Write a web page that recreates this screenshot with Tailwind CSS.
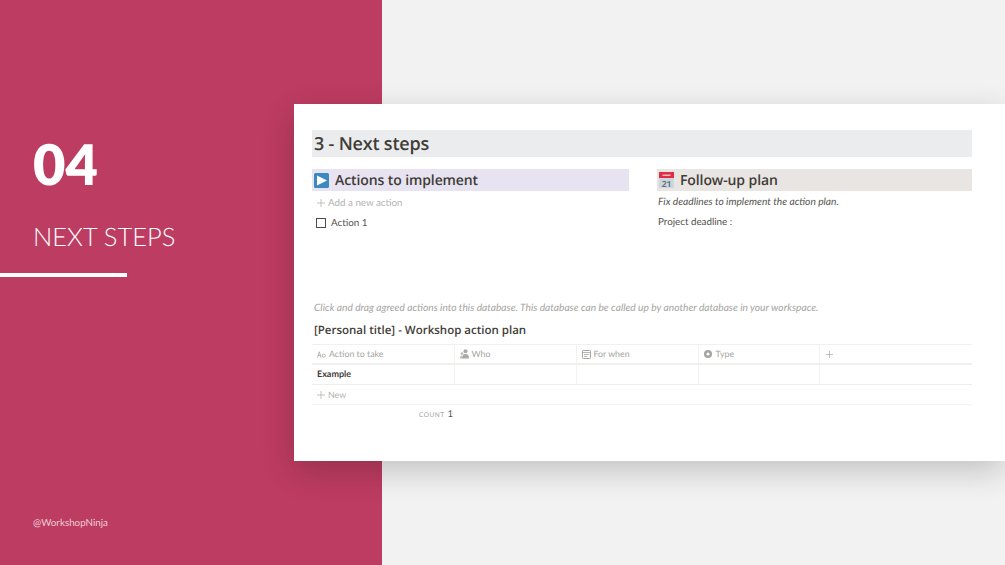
<!DOCTYPE html>
<html lang="en">
<head>
    <meta charset="UTF-8">
    <title>Next steps</title>
    <script src="https://cdn.jsdelivr.net/npm/@tailwindcss/browser@4"></script>
</head>
<body class="w-[1005px] h-[565px] overflow-hidden bg-[#f2f2f2] font-['Lato',sans-serif] [text-rendering:geometricPrecision]">
    <div class="relative w-full h-full">
        <!-- Left panel -->
        <div class="w-[381.5px] h-full bg-[#bd3c61] flex flex-col text-white">
            <div class="pl-[33px] pt-[134px] text-[56px] leading-[60px] font-extrabold">04</div>
            <div class="pl-[33px] mt-[26px] text-[25.5px] leading-[34px] font-light">NEXT STEPS</div>
            <div class="mt-[19px] w-[127px] h-[4px] bg-white"></div>
            <div class="pl-[33px] mt-auto mb-[35px] text-[9.8px] leading-[14px] text-white/75">@WorkshopNinja</div>
        </div>

        <!-- Floating notion window -->
        <div class="absolute left-[294px] top-[104px] w-[711px] h-[357px] bg-white pl-[18px] pr-[33px] pt-[26px] shadow-[0_10px_30px_rgba(0,0,0,0.2)] font-['Open_Sans',sans-serif]">
            <div class="h-[27px] bg-[#ebeced] pl-[2px] text-[18px] leading-[29px] font-semibold tracking-[-0.2px] text-[#3f3d38]">3 - Next steps</div>

            <div class="mt-[12px] flex justify-between">
                <div class="w-[317px]">
                    <div class="h-[22px] bg-[#e8e3f0] flex items-center pl-[2px] gap-[6px] text-[14px] font-semibold tracking-[-0.1px] text-[#3f3d38]">
                        <svg width="15" height="15" viewBox="0 0 15 15"><rect width="15" height="15" rx="1.5" fill="#3b88c3"/><path d="M3 2.5 L13 7.5 L3 12.5 Z" fill="#fff"/></svg>
                        <span>Actions to implement</span>
                    </div>
                    <div class="mt-[5px] flex items-center h-[14px] pl-[5px] gap-[3px] font-['Lato',sans-serif] text-[9.8px] text-[#b4b3af]">
                        <svg width="8" height="8" viewBox="0 0 8 8"><path d="M4 0V8M0 4H8" stroke="#b4b3af" stroke-width="0.8"/></svg>
                        <span>Add a new action</span>
                    </div>
                    <div class="mt-[6px] flex items-center h-[14px] pl-[4px] gap-[5px] font-['Lato',sans-serif] text-[9.8px] text-[#55534e]">
                        <span class="w-[10px] h-[10px] border border-[#4a4a48]"></span>
                        <span>Action 1</span>
                    </div>
                </div>
                <div class="w-[315px]">
                    <div class="h-[22px] bg-[#e9e5e3] flex items-center pl-[2px] gap-[6px] text-[14px] font-semibold tracking-[-0.1px] text-[#3f3d38]">
                        <svg width="15" height="16" viewBox="0 0 15 16"><rect y="1" width="15" height="15" fill="#ccd6dd"/><rect width="15" height="6" fill="#dd2e44"/><rect x="3.5" y="2.5" width="8" height="1.5" fill="#f4b6bf"/><text x="7.5" y="14.5" font-size="8.5" font-weight="700" text-anchor="middle" fill="#66757f" font-family="Open Sans">21</text></svg>
                        <span>Follow-up plan</span>
                    </div>
                    <div class="mt-[4px] pl-[1px] font-['Lato',sans-serif] text-[10.2px] leading-[14px] italic text-[#55534e]">Fix deadlines to implement the action plan.</div>
                    <div class="mt-[6px] pl-[1px] font-['Lato',sans-serif] text-[9.8px] leading-[14px] text-[#55534e]">Project deadline :</div>
                </div>
            </div>

            <p class="mt-[71px] pl-[2px] font-['Lato',sans-serif] text-[10.2px] leading-[14px] italic text-[#a5a4a0]">Click and drag agreed actions into this database. This database can be called up by another database in your workspace.</p>
            <div class="mt-[7px] pl-[2px] text-[11.5px] leading-[18px] font-semibold text-[#3f3d38]">[Personal title] - Workshop action plan</div>

            <!-- Table -->
            <div class="mt-[4px] border-t border-[#f0f0ef] font-['Lato',sans-serif] text-[8.8px] text-[#a5a4a0]">
                <div class="grid grid-cols-[142.5px_122px_122px_121.5px_1fr] h-[20px] border-b-2 border-[#efefee]">
                    <div class="flex items-center pl-[5px] gap-[3px] border-r border-[#f2f2f1]">
                        <svg width="9" height="7" viewBox="0 0 9 7"><path d="M0.5 6.5 L2.3 0.8 L4 6.5 M1 4.6H3.6" fill="none" stroke="#b4b3af"/><circle cx="6.7" cy="4.7" r="1.6" fill="none" stroke="#b4b3af"/></svg>
                        <span>Action to take</span>
                    </div>
                    <div class="flex items-center pl-[5px] gap-[3px] border-r border-[#f2f2f1]">
                        <svg width="9" height="10" viewBox="0 0 9 10"><circle cx="5.5" cy="2.2" r="2" fill="#aaa9a5"/><path d="M2 9.5 Q2 5 5.5 5 Q9 5 9 9.5Z" fill="#aaa9a5"/><circle cx="2" cy="4.6" r="1.4" fill="#c0bfbb"/><path d="M0 9.5 Q0 6.5 2 6.5 L3 9.5Z" fill="#c0bfbb"/></svg>
                        <span>Who</span>
                    </div>
                    <div class="flex items-center pl-[5px] gap-[3px] border-r border-[#f2f2f1]">
                        <svg width="9" height="9" viewBox="0 0 9 9"><rect x="0.5" y="0.5" width="8" height="8" rx="0.8" fill="none" stroke="#a5a4a0"/><path d="M0.5 2.5H8.5M2 4.5H7M2 6.5H5" stroke="#a5a4a0" stroke-width="0.8"/></svg>
                        <span>For when</span>
                    </div>
                    <div class="flex items-center pl-[5px] gap-[3px] border-r border-[#f2f2f1]">
                        <svg width="8" height="8" viewBox="0 0 8 8"><circle cx="4" cy="4" r="4" fill="#a5a4a0"/><circle cx="4" cy="4" r="1.6" fill="#fff"/></svg>
                        <span class="ml-[1px]">Type</span>
                    </div>
                    <div class="flex items-center pl-[6px]">
                        <svg width="7" height="7" viewBox="0 0 7 7"><path d="M3.5 0V7M0 3.5H7" stroke="#b4b3af" stroke-width="0.8"/></svg>
                    </div>
                </div>
                <div class="grid grid-cols-[142.5px_122px_122px_121.5px_1fr] h-[20px] border-b border-[#eeeeed]">
                    <div class="flex items-center pl-[5px] pb-[1px] border-r border-[#f2f2f1] text-[9px] font-bold text-[#3f3d38]">Example</div>
                    <div class="border-r border-[#f2f2f1]"></div>
                    <div class="border-r border-[#f2f2f1]"></div>
                    <div class="border-r border-[#f2f2f1]"></div>
                    <div></div>
                </div>
                <div class="h-[20px] flex items-center pl-[5px] gap-[3px] border-b border-[#f2f2f1] text-[#b4b3af]">
                    <svg width="8" height="8" viewBox="0 0 8 8"><path d="M4 0V8M0 4H8" stroke="#b4b3af" stroke-width="0.8"/></svg>
                    <span>New</span>
                </div>
                <div class="h-[21px] flex items-center justify-start pl-[107px] gap-[3px]">
                    <span class="text-[6.5px] tracking-[0.5px] text-[#a5a4a0]">COUNT</span>
                    <span class="text-[9.5px] text-[#55534e]">1</span>
                </div>
            </div>
        </div>
    </div>
</body>
</html>
